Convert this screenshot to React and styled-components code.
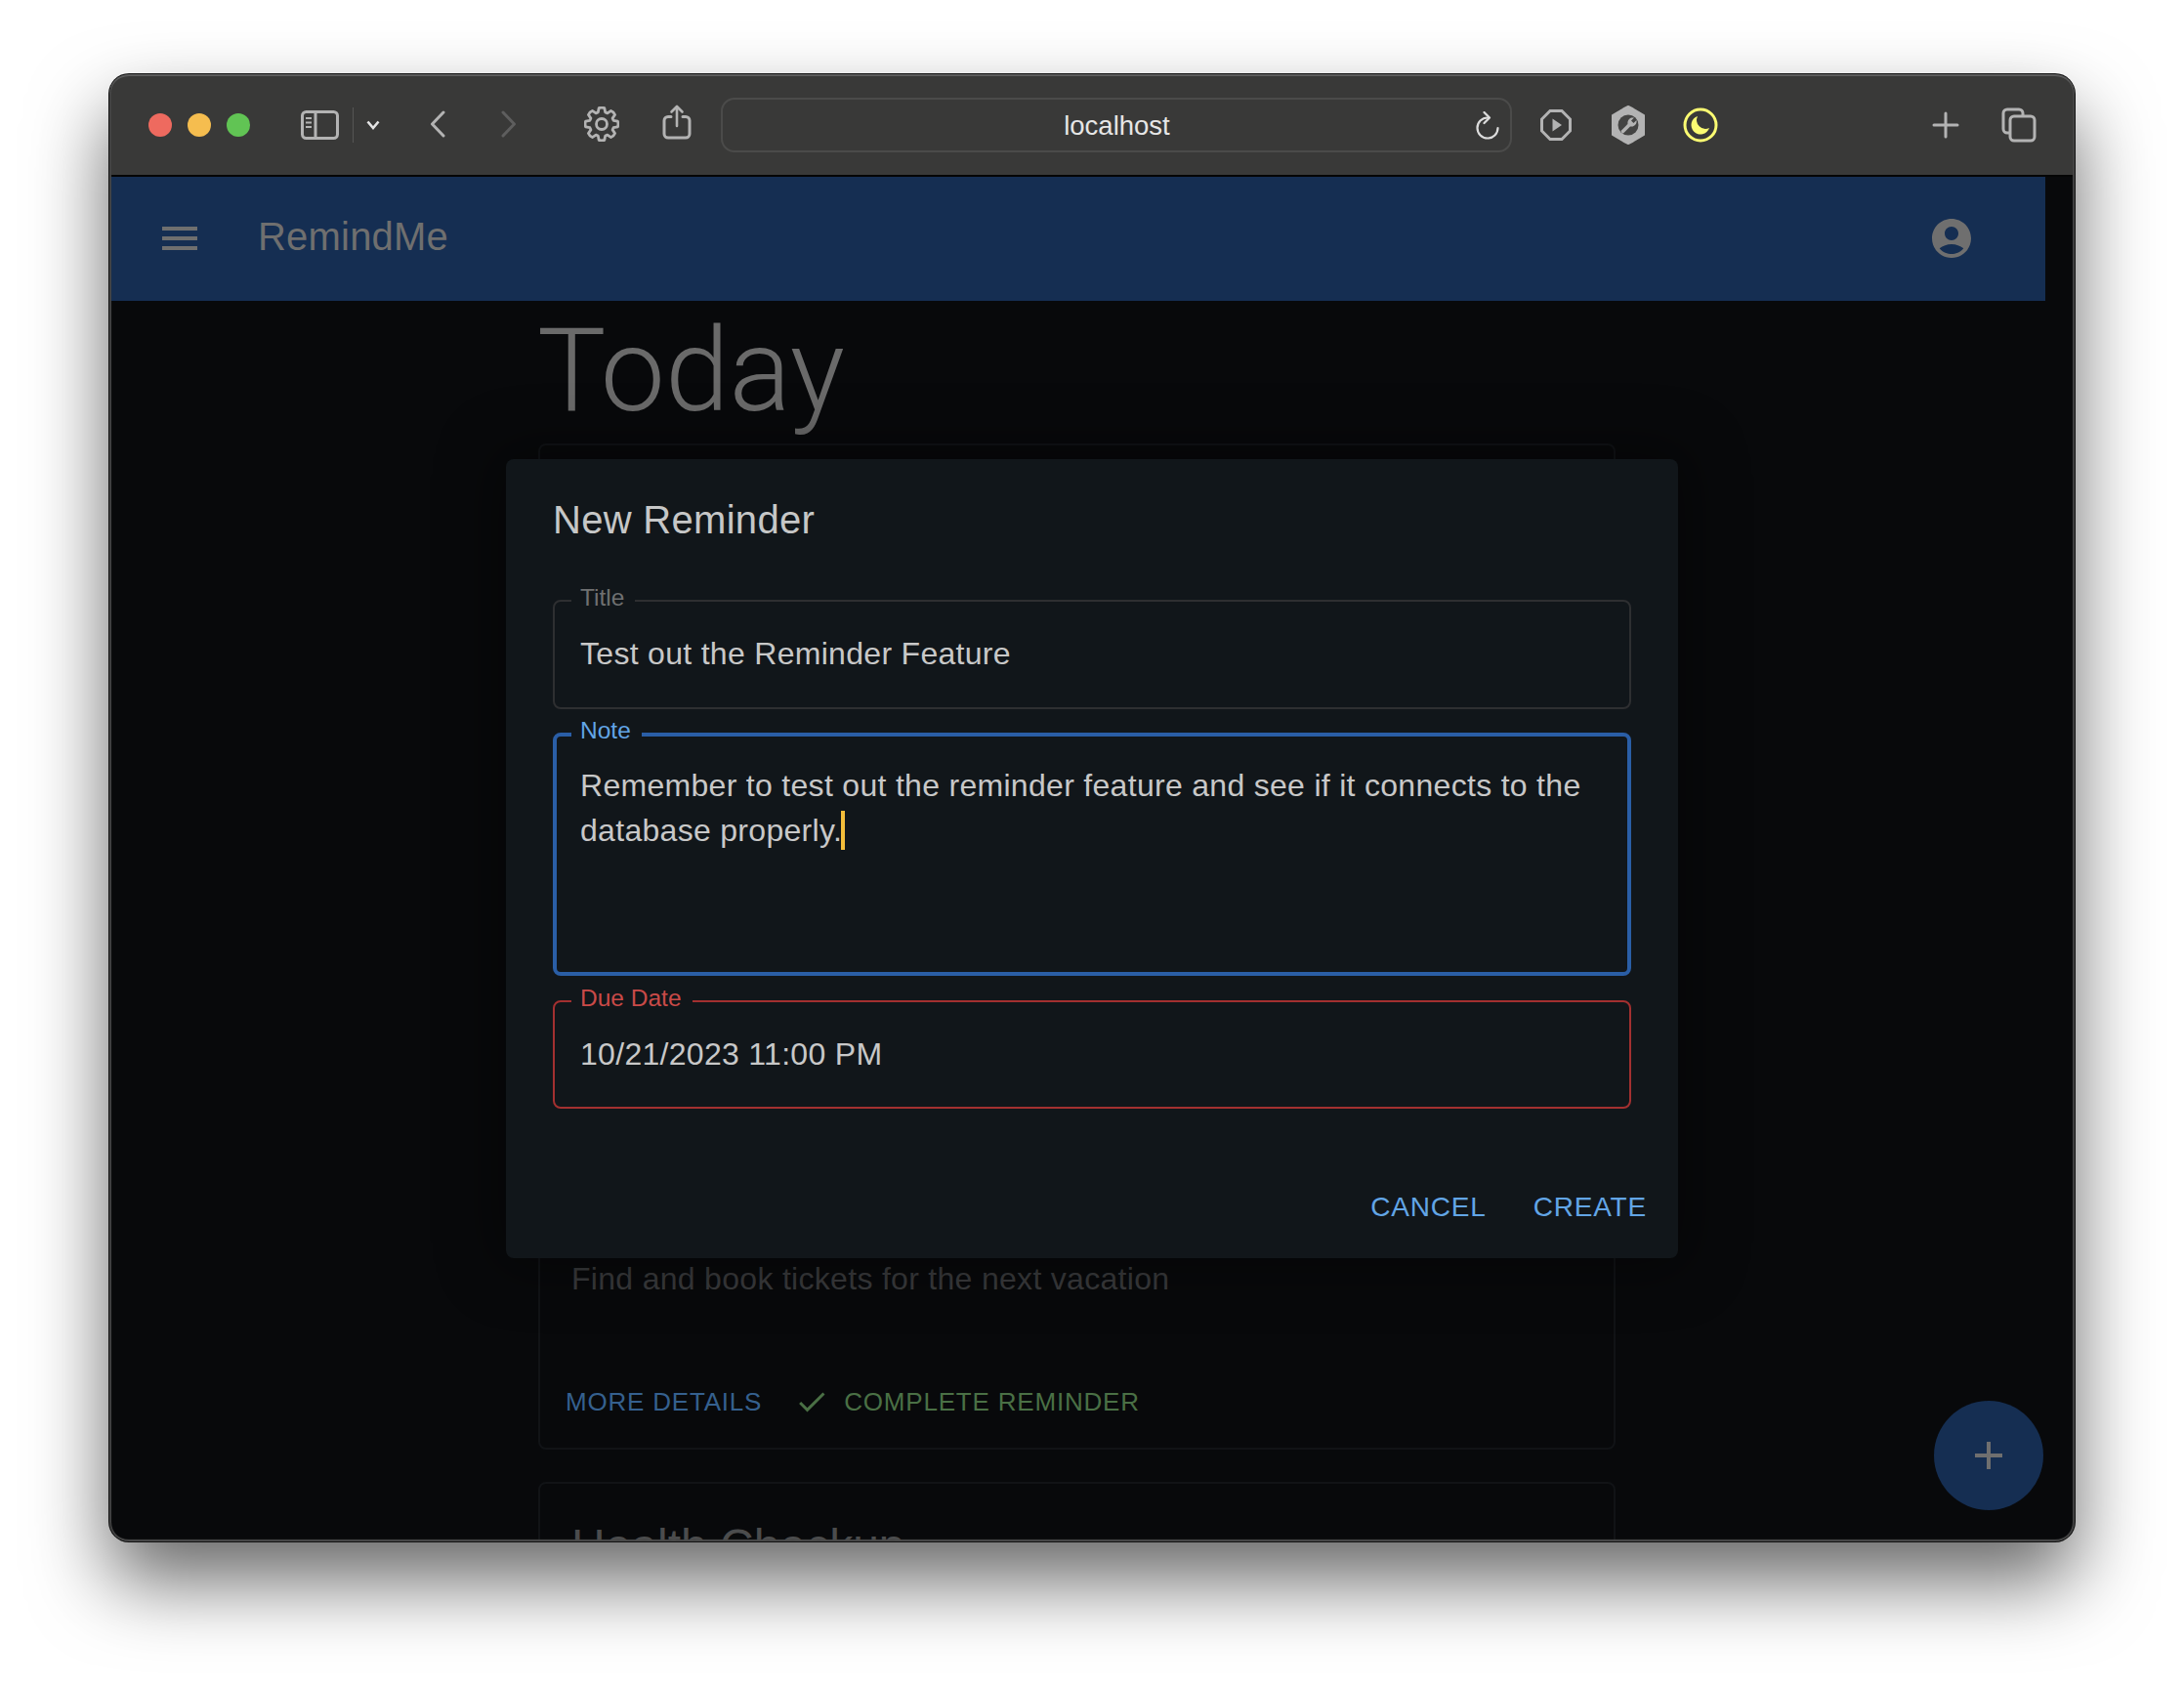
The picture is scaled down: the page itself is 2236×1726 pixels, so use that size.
import React from 'react'
import styled, {createGlobalStyle} from 'styled-components'

const GlobalStyle = createGlobalStyle`
  html, body {
    margin: 0;
    background: #fff;
    font-family: "Liberation Sans", Arial, sans-serif;
  }
  * {
    box-sizing: border-box;
  }
`

const Desktop = styled.div`
  width: 2236px;
  height: 1726px;
  padding: 76px 112px 148px 112px;
  overflow: hidden;
  background: #fff;
`
const BrowserWindow = styled.div`
  position: relative;
  height: 1502px;
  display: flex;
  flex-direction: column;
  border-radius: 20px;
  overflow: hidden;
  background: #08090b;
  box-shadow: 0 0 0 1px #111, 0 40px 80px rgba(0, 0, 0, 0.6);

  &::after {
    content: '';
    position: absolute;
    inset: 0;
    border-radius: 20px;
    box-shadow: inset 0 2px 0 #5c5c5c, inset 0 -2px 1px #4a4a4a, inset 2px 0 1px #444, inset -2px 0 1px #444;
    pointer-events: none;
  }
`
const Toolbar = styled.header`
  flex: none;
  height: 105px;
  display: flex;
  align-items: center;
  padding: 0 39px 0 40px;
  background: #393938;
  border-bottom: 2px solid #050505;
`
const Dots = styled.div`
  display: flex;
  gap: 16px;
`
const Dot = styled.span`
  width: 24px;
  height: 24px;
  border-radius: 50%;
  background: ${p => p.$color};
`
const ToolIcon = styled.svg`
  flex: none;
  margin-left: ${p => p.$left || 0}px;
  margin-bottom: ${p => p.$lift || 0}px;
  color: ${p => p.$color || '#b3b3b3'};
`
const ToolDivider = styled.span`
  flex: none;
  width: 1px;
  height: 36px;
  margin-left: 14px;
  background: #565655;
`
const AddressBar = styled.div`
  flex: none;
  position: relative;
  width: 810px;
  height: 56px;
  margin-left: 29.5px;
  display: flex;
  align-items: center;
  justify-content: center;
  padding: 2px 0 0 2px;
  border: 2px solid #4b4b4a;
  border-radius: 14px;
  color: #e6e6e6;
  font-size: 27.5px;
`
const ReloadIcon = styled.svg`
  position: absolute;
  right: 10px;
  top: 12px;
  color: #dcdcdc;
`
const Spacer = styled.div`
  flex: 1;
`
const Viewport = styled.div`
  flex: 1;
  min-height: 0;
  padding-right: 30px;
  display: flex;
  flex-direction: column;
`
const AppBar = styled.div`
  flex: none;
  height: 127px;
  display: flex;
  align-items: center;
  padding: 0 72px 2px 48px;
  background: #152e52;
  color: #6f6f6f;
`
const AppTitle = styled.div`
  margin: 0 0 2px 56px;
  font-size: 40px;
  letter-spacing: 0.2px;
  flex: 1;
`
const MuiIcon = styled.svg`
  flex: none;
  width: ${p => p.$size || 48}px;
  height: ${p => p.$size || 48}px;
  fill: currentColor;
`
const Page = styled.main`
  width: 1542px;
  padding-left: 439px;
`
const Heading = styled.h1`
  margin: 0 0 0 -1px;
  height: 146px;
  font-family: Roboto, "Liberation Sans", sans-serif;
  font-weight: 300;
  font-size: 118px;
  line-height: 144px;
  color: #6a6a6a;
`
const Card = styled.section`
  height: ${p => p.$h}px;
  margin-bottom: 33px;
  display: flex;
  flex-direction: column;
  justify-content: ${p => p.$end ? 'flex-end' : 'flex-start'};
  padding: ${p => p.$end ? '0 0 15px 26px' : '36px 0 0 32px'};
  border: 2px solid #111316;
  border-radius: 8px;
`
const CardTitle = styled.h2`
  margin: 0;
  font-weight: 400;
  font-size: 48px;
  line-height: 56px;
  color: #4b4c4d;
`
const CardBody = styled.p`
  margin: 0 0 72px 6px;
  font-size: 32px;
  line-height: 44px;
  letter-spacing: 0.3px;
  color: #3a3b3d;
`
const CardActions = styled.div`
  display: flex;
  align-items: center;
  height: 64px;
  font-size: 26px;
  letter-spacing: 0.8px;
`
const ActionLink = styled.span`
  color: ${p => p.$color};
  display: flex;
  align-items: center;
`
const CheckIcon = styled(MuiIcon)`
  margin: 0 15px 0 33px;
`
const Fab = styled.button`
  position: absolute;
  left: 1868px;
  top: 1358px;
  width: 112px;
  height: 112px;
  padding: 0;
  border: none;
  border-radius: 50%;
  display: flex;
  align-items: center;
  justify-content: center;
  background: #152e52;
  color: #6f6f6f;
`
const Dialog = styled.div`
  position: absolute;
  left: 406px;
  top: 394px;
  width: 1200px;
  height: 818px;
  display: flex;
  flex-direction: column;
  padding: 38px 48px 36px 48px;
  border-radius: 8px;
  background: #11161a;
  box-shadow: 0 0 60px 12px rgba(0, 0, 0, 0.4);
`
const DialogTitle = styled.h2`
  margin: 0 0 45px 0;
  font-weight: 400;
  font-size: 40px;
  line-height: 48px;
  letter-spacing: 0.3px;
  color: #c6c7c7;
`
const Fields = styled.div`
  display: flex;
  flex-direction: column;
  gap: 12px;
`
const Field = styled.fieldset`
  min-width: 0;
  margin: 0;
  height: ${p => p.$h}px;
  padding: ${p => p.$top}px 24px 0 ${p => p.$left}px;
  border: ${p => p.$line}px solid ${p => p.$color};
  border-radius: 8px;
`
const Legend = styled.legend`
  position: relative;
  top: ${p => p.$raise ? -4 : -3}px;
  margin-left: -9px;
  padding: 0 11px 0 9px;
  font-size: 24.5px;
  line-height: 28px;
  color: ${p => p.$color};
`
const Value = styled.div`
  font-size: 32px;
  line-height: 46px;
  letter-spacing: 0.3px;
  color: #c8c8c8;
`
const Caret = styled.span`
  display: inline-block;
  width: 4px;
  height: 40px;
  margin-left: -1px;
  vertical-align: -9px;
  background: #f3bd3a;
`
const DialogActions = styled.div`
  margin: auto -16px 0 0;
  display: flex;
  justify-content: flex-end;
  gap: 48px;
`
const TextButton = styled.button`
  padding: 0;
  border: none;
  background: none;
  font-family: inherit;
  font-size: 28px;
  line-height: 32px;
  letter-spacing: 0.8px;
  color: #62a5e6;
`

const MENU = 'M3 18h18v-2H3v2zm0-5h18v-2H3v2zm0-7v2h18V6H3z'
const ACCOUNT = 'M12 2C6.48 2 2 6.48 2 12s4.48 10 10 10 10-4.48 10-10S17.52 2 12 2zm0 4c1.93 0 3.5 1.57 3.5 3.5S13.93 13 12 13s-3.5-1.57-3.5-3.5S10.07 6 12 6zm0 14c-2.03 0-4.43-.82-6.14-2.88C7.55 15.8 9.68 15 12 15s4.45.8 6.14 2.12C16.43 19.18 14.03 20 12 20z'
const ADD = 'M19 13h-6v6h-2v-6H5v-2h6V5h2v6h6v2z'
const CHECK = 'M9 16.2 4.8 12l-1.4 1.4L9 19 21 7l-1.4-1.4L9 16.2z'

// eight lobed safari gear outline
const gearPath = () => {
    const points = []
    for (let i = 0; i < 8; i++) {
        const mid = (i * Math.PI) / 4 - Math.PI / 2
        const at = (r, a) => `${(18 + r * Math.cos(a)).toFixed(2)} ${(18 + r * Math.sin(a)).toFixed(2)}`
        points.push(`${i === 0 ? 'M' : 'L'}${at(12.6, mid - 0.3)}`)
        points.push(`L${at(16.6, mid - 0.17)}`)
        points.push(`Q${at(17.6, mid)} ${at(16.6, mid + 0.17)}`)
        points.push(`L${at(12.6, mid + 0.3)}`)
    }
    return points.join(' ') + 'Z'
}

const BrowserToolbar = () => (
    <Toolbar>
        <Dots>
            <Dot $color="#ee6a5f" />
            <Dot $color="#f5bd4f" />
            <Dot $color="#61c454" />
        </Dots>
        <ToolIcon $left={52} width="39" height="30" viewBox="0 0 39 30" fill="none" stroke="currentColor" strokeWidth="3">
            <rect x="1.5" y="1.5" width="36" height="27" rx="4" />
            <path d="M15 2v26" />
            <path d="M5 8h6M5 12.5h6M5 17h6" strokeWidth="2" />
        </ToolIcon>
        <ToolDivider />
        <ToolIcon $left={13} $color="#e4e4e4" width="14" height="10" viewBox="0 0 14 10" fill="none" stroke="currentColor" strokeWidth="2.6">
            <path d="M1.5 1.5 7 8l5.500-6.500" />
        </ToolIcon>
        <ToolIcon $left={51} $lift={2} width="16" height="28" viewBox="0 0 16 28" fill="none" stroke="currentColor" strokeWidth="3" strokeLinecap="round" strokeLinejoin="round">
            <path d="M14 2 2.500 14 14 26" />
        </ToolIcon>
        <ToolIcon $left={57} $lift={2} $color="#5e5e5e" width="16" height="28" viewBox="0 0 16 28" fill="none" stroke="currentColor" strokeWidth="3" strokeLinecap="round" strokeLinejoin="round">
            <path d="M2 2 13.500 14 2 26" />
        </ToolIcon>
        <ToolIcon $left={69} $lift={2} width="36" height="36" viewBox="0 0 36 36" fill="none" stroke="currentColor" strokeWidth="2.8" strokeLinejoin="round">
            <path d={gearPath()} />
            <circle cx="18" cy="18" r="5.5" />
        </ToolIcon>
        <ToolIcon $left={44} $lift={6} width="30" height="36" viewBox="0 0 30 36" fill="none" stroke="currentColor" strokeWidth="3" strokeLinecap="round" strokeLinejoin="round">
            <path d="M9 12.500H6a4 4 0 0 0-4 4V30a4 4 0 0 0 4 4h18a4 4 0 0 0 4-4V16.500a4 4 0 0 0-4-4h-3" />
            <path d="M15 22V2M9.500 7.500 15 2l5.500 5.500" strokeWidth="2.6" />
        </ToolIcon>
        <AddressBar>
            localhost
            <ReloadIcon width="26" height="30" viewBox="0 0 26 30" fill="none" stroke="currentColor" strokeWidth="2.2" strokeLinecap="round" strokeLinejoin="round">
                <path d="M13 6.500A10.500 10.500 0 1 0 23.500 17" />
                <path d="M9.500 1 15 6.500 9.500 12" />
            </ReloadIcon>
        </AddressBar>
        <ToolIcon $left={29} width="32" height="32" viewBox="0 0 32 32" fill="none" stroke="currentColor" strokeWidth="3">
            <path d="M10 1.500h12l8.500 8.500v12L22 30.500H10L1.500 22V10z" />
            <path d="M12.500 9.500 22 16l-9.500 6.500z" fill="currentColor" stroke="none" />
        </ToolIcon>
        <ToolIcon $left={40} width="36" height="40" viewBox="0 0 36 40" fill="currentColor" stroke="currentColor" strokeWidth="2" strokeLinejoin="round">
            <path d="M13 3.500 18 1l5 2.500L34 10v20l-11 6.500L18 39l-5-2.500L2 30V10z" />
            <circle cx="18" cy="20" r="10.500" fill="#444443" stroke="none" />
            <path d="M12.500 26.500 18.500 20.500" fill="none" strokeWidth="3.600" strokeLinecap="round" />
            <path d="M17.500 19a5.500 5.500 0 0 1 6.500-6.500l-3 3 2.500 2.500 3-3a5.500 5.500 0 0 1-6.500 6.500z" stroke="none" />
        </ToolIcon>
        <ToolIcon $left={38} $color="#fbfb72" width="36" height="36" viewBox="0 0 36 36" fill="none" stroke="currentColor" strokeWidth="3">
            <circle cx="18" cy="18" r="16" />
            <path d="M15 9a9.500 9.500 0 1 0 12 12 9 9 0 0 1-12-12z" fill="currentColor" stroke="none" />
        </ToolIcon>
        <Spacer />
        <ToolIcon width="28" height="28" viewBox="0 0 28 28" fill="none" stroke="currentColor" strokeWidth="3" strokeLinecap="round">
            <path d="M14 2v24M2 14h24" />
        </ToolIcon>
        <ToolIcon $left={43} width="36" height="36" viewBox="0 0 36 36" fill="none" stroke="currentColor" strokeWidth="3">
            <path d="M8 26H6a4 4 0 0 1-4-4V6a4 4 0 0 1 4-4h12a4 4 0 0 1 4 4v2" />
            <rect x="9" y="9" width="25" height="25" rx="4" />
        </ToolIcon>
    </Toolbar>
)

const NewReminderDialog = () => (
    <Dialog>
        <DialogTitle>New Reminder</DialogTitle>
        <Fields>
            <Field $h={125} $top={17} $left={26} $line={2} $color="#2e2f31">
                <Legend $color="#6f7071">Title</Legend>
                <Value>Test out the Reminder Feature</Value>
            </Field>
            <Field $h={261} $top={15} $left={24} $line={4} $color="#2a5ea6">
                <Legend $raise $color="#62a5e6">Note</Legend>
                <Value>
                    Remember to test out the reminder feature and see if it connects to the database properly.<Caret />
                </Value>
            </Field>
            <Field $h={124} $top={17} $left={26} $line={2} $color="#a33030">
                <Legend $color="#c94a48">Due Date</Legend>
                <Value>10/21/2023 11:00 PM</Value>
            </Field>
        </Fields>
        <DialogActions>
            <TextButton>CANCEL</TextButton>
            <TextButton>CREATE</TextButton>
        </DialogActions>
    </Dialog>
)

export default function App() {
    return (
        <Desktop>
            <GlobalStyle />
            <BrowserWindow>
                <BrowserToolbar />
                <Viewport>
                    <AppBar>
                        <MuiIcon viewBox="0 0 24 24"><path d={MENU} /></MuiIcon>
                        <AppTitle>RemindMe</AppTitle>
                        <MuiIcon viewBox="0 0 24 24"><path d={ACCOUNT} /></MuiIcon>
                    </AppBar>
                    <Page>
                        <Heading>Today</Heading>
                        <Card $h={1030} $end>
                            <CardBody>Find and book tickets for the next vacation</CardBody>
                            <CardActions>
                                <ActionLink $color="#35608e">MORE DETAILS</ActionLink>
                                <ActionLink $color="#4a7045">
                                    <CheckIcon $size={36} viewBox="0 0 24 24"><path d={CHECK} /></CheckIcon>
                                    COMPLETE REMINDER
                                </ActionLink>
                            </CardActions>
                        </Card>
                        <Card $h={200}>
                            <CardTitle>Health Checkup</CardTitle>
                        </Card>
                    </Page>
                </Viewport>
                <Fab aria-label="add">
                    <MuiIcon viewBox="0 0 24 24"><path d={ADD} /></MuiIcon>
                </Fab>
                <NewReminderDialog />
            </BrowserWindow>
        </Desktop>
    )
}
